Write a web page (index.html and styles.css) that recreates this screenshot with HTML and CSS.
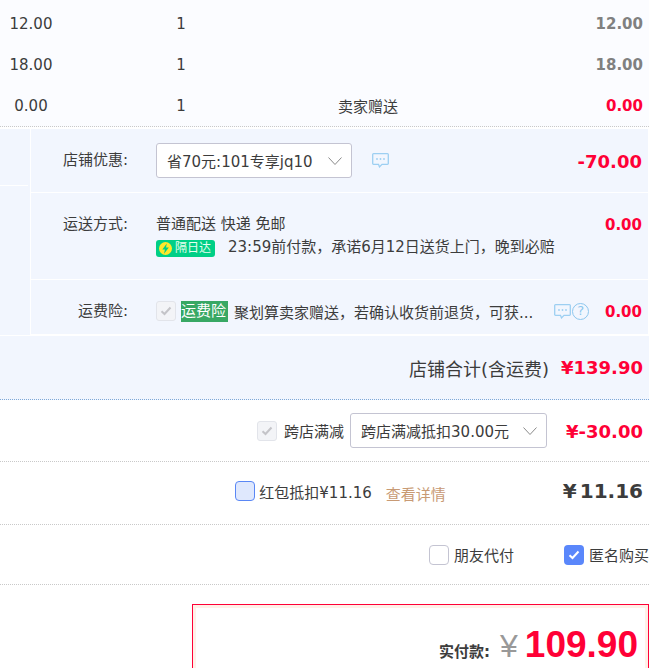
FILE: index.html
```html
<!DOCTYPE html>
<html lang="zh">
<head>
<meta charset="utf-8">
<title>确认订单</title>
<link rel="stylesheet" href="styles.css">
</head>
<body>
<main class="page">
  <section class="items">
    <div class="item"><span class="price">12.00</span><span class="qty">1</span><span class="promo"></span><span class="sub">12.00</span></div>
    <div class="item"><span class="price">18.00</span><span class="qty">1</span><span class="promo"></span><span class="sub">18.00</span></div>
    <div class="item"><span class="price">0.00</span><span class="qty">1</span><span class="promo">卖家赠送</span><span class="sub red">0.00</span></div>
  </section>

  <section class="shop">
    <div class="side"><div class="side-top"></div><div class="side-bottom"></div></div>
    <div class="rows">
      <div class="row row-coupon">
        <div class="label label-coupon">店铺优惠:</div>
        <div class="body body-center">
          <div class="select select-coupon"><span>省70元:101专享jq10</span><svg class="chev" viewBox="0 0 14 8"><path d="M.5.5 7 7.5 13.5.5"/></svg></div>
          <svg class="msg msg-a" viewBox="0 0 17 15"><path d="M1.5.7h14a.8.8 0 0 1 .8.8v9a.8.8 0 0 1-.8.8H10l-2.5 2.6-1-2.6h-5a.8.8 0 0 1-.8-.8v-9a.8.8 0 0 1 .8-.8z"/><circle cx="5" cy="6" r=".9"/><circle cx="8.5" cy="6" r=".9"/><circle cx="12" cy="6" r=".9"/></svg>
        </div>
        <div class="amt amt-big">-70.00</div>
      </div>
      <div class="row row-ship">
        <div class="label">运送方式:</div>
        <div class="body">
          <div class="ship-line">普通配送 快递 免邮</div>
          <div class="ship-line ship-next">
            <span class="nextday"><svg class="bolt" viewBox="0 0 14 14"><circle cx="7" cy="7" r="7"/><path d="M8.4 1.6 3.6 8h2.8L5.4 12.6 10.6 5.8H7.6z"/></svg>隔日达</span>
            <span class="ship-promise">23:59前付款&#65292;承诺6月12日送货上门&#65292;晚到必赔</span>
          </div>
        </div>
        <div class="amt amt-ship">0.00</div>
      </div>
      <div class="row row-ins">
        <div class="label">运费险:</div>
        <div class="body body-center">
          <span class="check check-off"><svg viewBox="0 0 12 10"><path d="M1.5 5.2 4.5 8 10.5 1.5"/></svg></span>
          <span class="ins-tag">运费险</span>
          <span class="ins-text">聚划算卖家赠送&#65292;若确认收货前退货&#65292;可获...</span>
          <svg class="msg msg-b" viewBox="0 0 17 15"><path d="M1.5.7h14a.8.8 0 0 1 .8.8v9a.8.8 0 0 1-.8.8H10l-2.5 2.6-1-2.6h-5a.8.8 0 0 1-.8-.8v-9a.8.8 0 0 1 .8-.8z"/><circle cx="5" cy="6" r=".9"/><circle cx="8.5" cy="6" r=".9"/><circle cx="12" cy="6" r=".9"/></svg>
          <span class="help">?</span>
        </div>
        <div class="amt amt-ins">0.00</div>
      </div>
    </div>
  </section>

  <section class="shop-total">
    <span class="total-label">店铺合计(含运费)</span>
    <span class="total-num">¥139.90</span>
  </section>

  <section class="line line-cross">
    <span class="check check-off"><svg viewBox="0 0 12 10"><path d="M1.5 5.2 4.5 8 10.5 1.5"/></svg></span>
    <span class="cross-label">跨店满减</span>
    <div class="select select-cross"><span>跨店满减抵扣30.00元</span><svg class="chev" viewBox="0 0 14 8"><path d="M.5.5 7 7.5 13.5.5"/></svg></div>
    <span class="cross-num">¥-30.00</span>
  </section>

  <section class="line line-red">
    <span class="check check-blue"></span>
    <span class="red-label">红包抵扣¥11.16</span>
    <span class="detail">查看详情</span>
    <span class="red-num"><span class="red-yen">¥</span>11.16</span>
  </section>

  <section class="line line-opts">
    <span class="check check-empty"></span>
    <span class="opt-label opt-friend">朋友代付</span>
    <span class="check check-on"><svg viewBox="0 0 12 10"><path d="M1.5 5.2 4.5 8 10.5 1.5"/></svg></span>
    <span class="opt-label">匿名购买</span>
  </section>

  <section class="pay-wrap">
    <div class="pay">
      <div class="pay-inner">
        <span class="pay-label">实付款:</span>
        <span class="pay-yen">¥</span>
        <span class="pay-num">109.90</span>
      </div>
    </div>
  </section>
</main>
</body>
</html>
```
FILE: styles.css
```css
* { box-sizing: border-box; }
html, body { margin: 0; padding: 0; height: 668px; overflow: hidden; background: #fff; }
body { font-family: "DejaVu Sans", "Noto Sans CJK SC", sans-serif; font-size: 15px; color: #3c3c3c; }
.page { width: 649px; }

.items { background: #fbfcff; padding-top: 3px; height: 127px; border-bottom: 1px dotted #c9c9c9; }
.item { display: grid; grid-template-columns: 62px 238px 136px 207px; height: 41px; align-items: center; }
.price { text-align: center; }
.qty { text-align: center; }
.promo { text-align: center; }
.sub { text-align: right; font-weight: bold; color: #808080; }
.red { color: #ff0036; }

.shop { display: flex; margin-top: 2px; width: 648px; height: 206px; background: #f2f6fe; }
.side { width: 31px; border-right: 1px solid #fff; flex: none; padding-right: 2px; }
.side-top { height: 57px; border-bottom: 1px solid #fff; }
.rows { flex: 1; display: flex; flex-direction: column; }
.row { display: flex; border-bottom: 1px solid #fff; }
.row-coupon { height: 64px; align-items: center; }
.row-ship { height: 87px; padding-top: 21px; }
.row-ins { height: 55px; align-items: center; padding-top: 8px; }
.label { width: 98px; padding-right: 1px; text-align: right; flex: none; line-height: 20px; }
.label-coupon { margin-top: -2px; }
.body { margin-left: 27px; flex: 1; min-width: 0; }
.body-center { display: flex; align-items: center; }
.amt { font-weight: bold; font-size: 15px; color: #ff0036; text-align: right; padding-right: 6px; }
.amt-big { font-size: 18px; margin-top: 2px; }
.amt-ship { margin-top: 2px; }
.amt-ins { margin-top: 2px; }

.select { display: flex; align-items: center; justify-content: space-between; height: 35px; background: #fff; border: 1px solid #c4c4d2; border-radius: 3px; padding: 0 9px 0 10px; flex: none; }
.select-coupon { width: 196px; }
.select-cross { width: 197px; margin-left: 6px; }
.chev { width: 14px; height: 8px; fill: none; stroke: #8a8a8a; stroke-width: 1; }
.msg { width: 17px; height: 15px; fill: none; stroke: #9dcff2; stroke-width: 1.3; flex: none; }
.msg circle { fill: #9dcff2; stroke: none; }
.msg-a { margin-left: 20px; }
.msg-b { margin-left: 21px; }
.help { width: 17px; height: 17px; margin-left: 1px; border: 1.5px solid #8cc6ee; border-radius: 50%; color: #8cc6ee; font-size: 13px; line-height: 14px; text-align: center; flex: none; }

.ship-line { height: 20px; line-height: 20px; }
.ship-next { display: flex; align-items: center; gap: 13px; margin-top: 5px; height: 18px; }
.ship-promise { margin-top: -2px; }
.nextday { display: inline-flex; align-items: center; width: 59px; height: 17px; padding-left: 3px; background: #00cf86; border-radius: 3px; color: #e6fff0; font-size: 12px; }
.bolt { width: 13px; height: 13px; margin-right: 3px; flex: none; }
.bolt circle { fill: #ffe82a; }
.bolt path { fill: #00cf86; }

.check { display: inline-flex; align-items: center; justify-content: center; width: 20px; height: 20px; border-radius: 3px; flex: none; }
.check svg { width: 12px; height: 10px; fill: none; stroke-width: 2; }
.check-off { background: #f3f4f7; border: 1px solid #e2e4ea; }
.check-off svg { stroke: #c4c4c8; }
.check-blue { background: #dfe8fd; border: 1px solid #5a87f5; border-radius: 4px; margin-top: -4px; }
.check-empty { background: #fff; border: 1px solid #c4c4d2; border-radius: 4px; }
.check-on { background: #5a87fb; border-radius: 4px; }
.check-on svg { stroke: #fff; }

.ins-tag { margin-left: 5px; height: 21px; width: 47px; background: #38a864; color: #fff; line-height: 20px; flex: none; }
.ins-text { margin-left: 6px; white-space: nowrap; }

.shop-total { display: flex; justify-content: flex-end; align-items: center; height: 65px; background: #f2f6fe; border-top: 1px solid #fff; border-bottom: 1px dotted #7ea8d8; padding-right: 6px; }
.total-label { font-size: 18px; }
.total-num { margin-left: 12px; font-size: 18px; font-weight: bold; color: #ff0036; }

.line { display: flex; align-items: center; justify-content: flex-end; border-bottom: 1px dotted #c9c9c9; }
.line-cross { height: 62px; padding-right: 6px; }
.cross-label { margin-left: 7px; }
.cross-num { margin-left: 19px; margin-top: 1px; font-size: 18px; font-weight: bold; color: #ff0036; }
.line-red { height: 63px; padding-right: 6px; }
.red-label { margin-left: 4px; margin-top: -3px; }
.detail { margin-left: 14px; color: #c89a74; margin-right: 117px; }
.red-num { font-size: 20px; font-weight: bold; color: #3c3c3c; margin-top: -4px; }
.red-yen { margin-right: 3px; }
.line-opts { height: 60px; }
.opt-label { margin-left: 5px; white-space: nowrap; }
.opt-friend { margin-right: 50px; }

.pay-wrap { display: flex; justify-content: flex-end; padding-top: 19px; }
.pay { width: 457px; height: 90px; border: 1px solid #ff0036; }
.pay-inner { display: flex; align-items: baseline; justify-content: flex-end; height: 100%; border: 3px solid #fff0e8; border-bottom: 0; padding: 16px 7px 0 0; background: #fff; }
.pay-label { font-size: 15px; font-weight: bold; }
.pay-yen { margin-left: 10px; font-size: 32px; color: #999; font-family: "Liberation Sans", sans-serif; }
.pay-num { margin-left: 7px; font-size: 37px; font-weight: bold; color: #ff0036; font-family: "Liberation Sans", sans-serif; }
```
